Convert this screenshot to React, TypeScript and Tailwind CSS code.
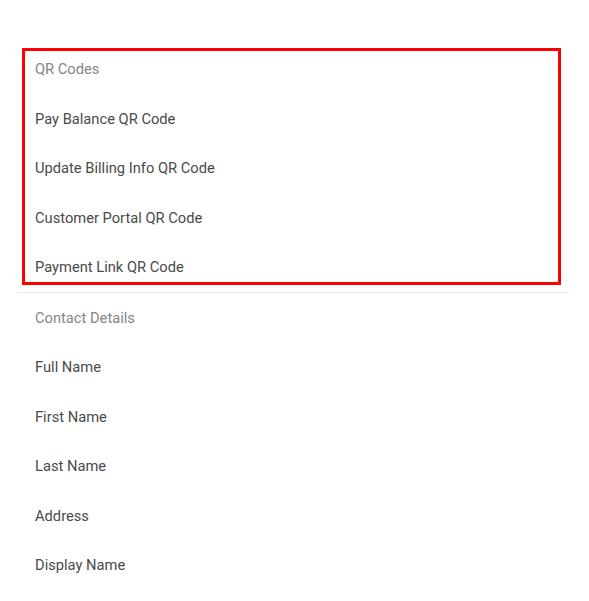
import React from 'react';

const groups = [
  {
    title: 'QR Codes',
    items: ['Pay Balance QR Code', 'Update Billing Info QR Code', 'Customer Portal QR Code', 'Payment Link QR Code'],
  },
  {
    title: 'Contact Details',
    items: ['Full Name', 'First Name', 'Last Name', 'Address', 'Display Name'],
  },
];

export default function App() {
  return (
    <div className="relative h-[601px] w-[589px] bg-white pt-[44.5px] font-['Roboto',sans-serif] text-[14.7px]">
      <div className="ml-[18px] w-[551px]">
        {groups.map((group, gi) => (
          <div key={group.title} className={gi > 0 ? 'border-t border-[#ececec]' : ''}>
            <div className="flex h-[49.5px] items-center pl-[17px] text-[#858585]">{group.title}</div>
            {group.items.map((item) => (
              <div key={item} className="flex h-[49.5px] items-center pl-[17px] text-[#4a4a4a]">
                {item}
              </div>
            ))}
          </div>
        ))}
      </div>
      {/* highlight box over the QR group */}
      <div className="pointer-events-none absolute left-[22px] top-[48px] h-[237px] w-[539px] border-[3px] border-[#ff0000]" />
    </div>
  );
}
